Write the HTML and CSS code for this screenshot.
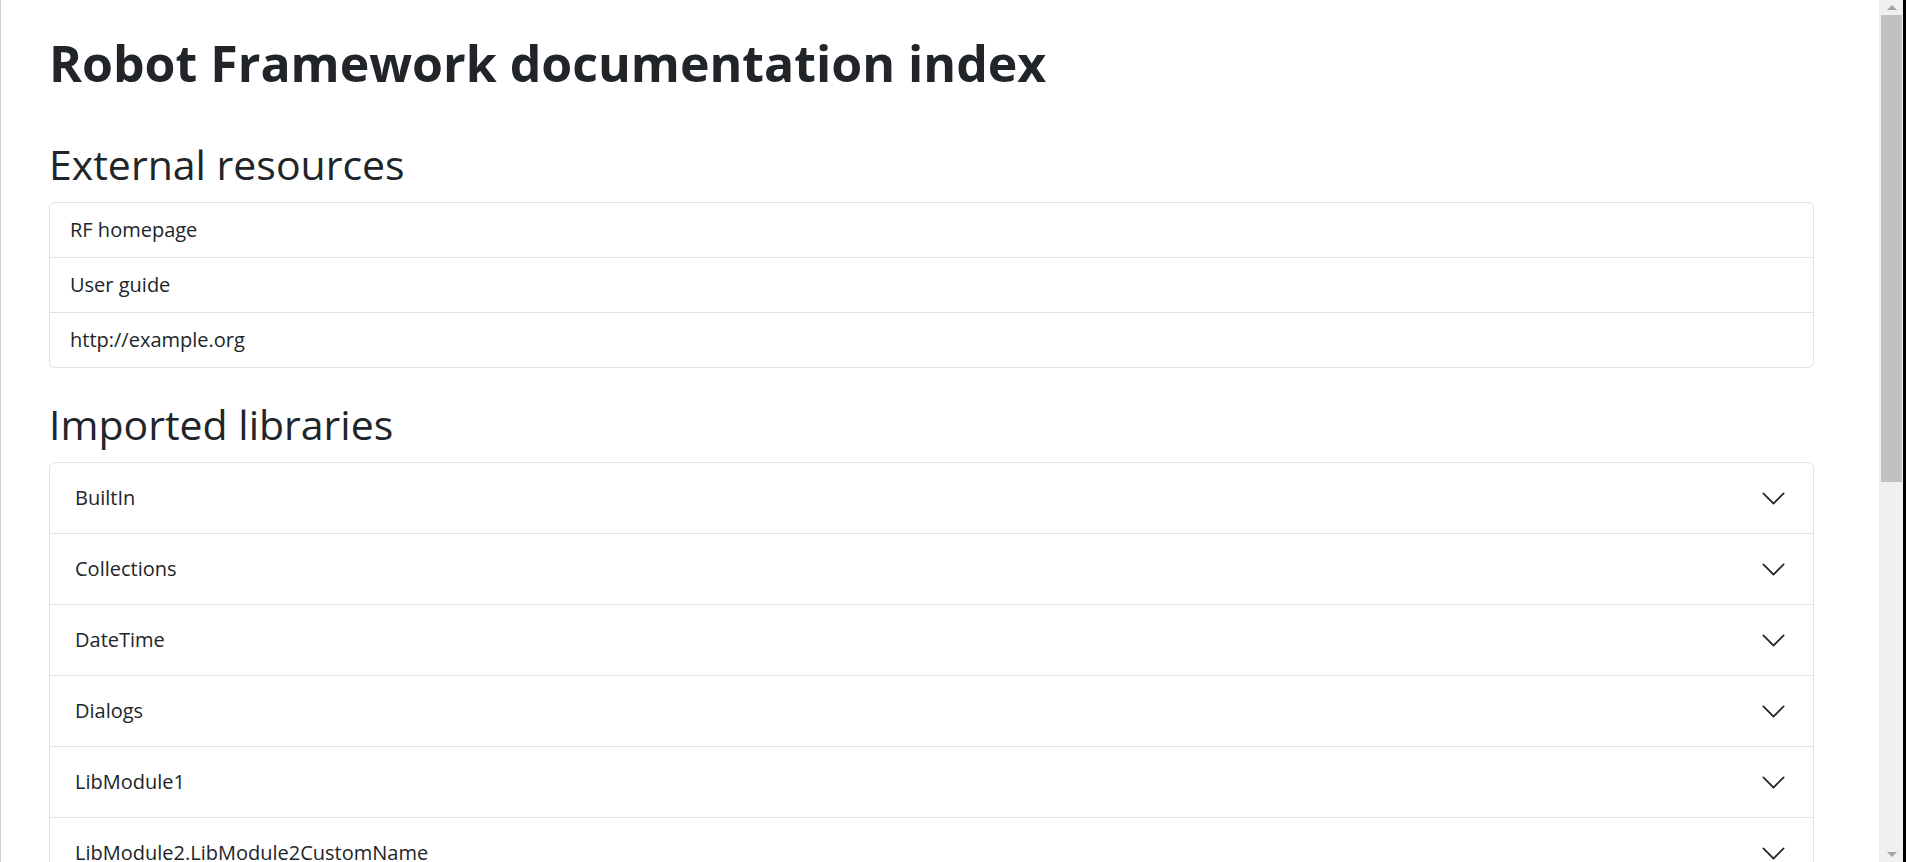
FILE: index.html
```html
<!DOCTYPE html>
<html lang="en">
<head>
<meta charset="utf-8">
<title>Robot Framework documentation index</title>
<link rel="stylesheet" href="styles.css">
</head>
<body>
<div class="window">
  <main class="page">
    <h1 class="title">Robot Framework documentation index</h1>

    <section class="section">
      <h2 class="section-title">External resources</h2>
      <ul class="list-group">
        <li class="list-item"><a class="list-link" href="#">RF homepage</a></li>
        <li class="list-item"><a class="list-link" href="#">User guide</a></li>
        <li class="list-item"><a class="list-link" href="#">http://example.org</a></li>
      </ul>
    </section>

    <section class="section">
      <h2 class="section-title">Imported libraries</h2>
      <div class="accordion">
        <div class="acc-item"><button class="acc-button"><span>BuiltIn</span><svg class="chevron" viewBox="0 0 16 16"><path d="M1.646 4.646a.5.5 0 0 1 .708 0L8 10.293l5.646-5.647a.5.5 0 0 1 .708.708l-6 6a.5.5 0 0 1-.708 0l-6-6a.5.5 0 0 1 0-.708z"/></svg></button></div>
        <div class="acc-item"><button class="acc-button"><span>Collections</span><svg class="chevron" viewBox="0 0 16 16"><path d="M1.646 4.646a.5.5 0 0 1 .708 0L8 10.293l5.646-5.647a.5.5 0 0 1 .708.708l-6 6a.5.5 0 0 1-.708 0l-6-6a.5.5 0 0 1 0-.708z"/></svg></button></div>
        <div class="acc-item"><button class="acc-button"><span>DateTime</span><svg class="chevron" viewBox="0 0 16 16"><path d="M1.646 4.646a.5.5 0 0 1 .708 0L8 10.293l5.646-5.647a.5.5 0 0 1 .708.708l-6 6a.5.5 0 0 1-.708 0l-6-6a.5.5 0 0 1 0-.708z"/></svg></button></div>
        <div class="acc-item"><button class="acc-button"><span>Dialogs</span><svg class="chevron" viewBox="0 0 16 16"><path d="M1.646 4.646a.5.5 0 0 1 .708 0L8 10.293l5.646-5.647a.5.5 0 0 1 .708.708l-6 6a.5.5 0 0 1-.708 0l-6-6a.5.5 0 0 1 0-.708z"/></svg></button></div>
        <div class="acc-item"><button class="acc-button"><span>LibModule1</span><svg class="chevron" viewBox="0 0 16 16"><path d="M1.646 4.646a.5.5 0 0 1 .708 0L8 10.293l5.646-5.647a.5.5 0 0 1 .708.708l-6 6a.5.5 0 0 1-.708 0l-6-6a.5.5 0 0 1 0-.708z"/></svg></button></div>
        <div class="acc-item"><button class="acc-button"><span>LibModule2.LibModule2CustomName</span><svg class="chevron" viewBox="0 0 16 16"><path d="M1.646 4.646a.5.5 0 0 1 .708 0L8 10.293l5.646-5.647a.5.5 0 0 1 .708.708l-6 6a.5.5 0 0 1-.708 0l-6-6a.5.5 0 0 1 0-.708z"/></svg></button></div>
        <div class="acc-item"><button class="acc-button"><span>OperatingSystem</span><svg class="chevron" viewBox="0 0 16 16"><path d="M1.646 4.646a.5.5 0 0 1 .708 0L8 10.293l5.646-5.647a.5.5 0 0 1 .708.708l-6 6a.5.5 0 0 1-.708 0l-6-6a.5.5 0 0 1 0-.708z"/></svg></button></div>
      </div>
    </section>
  </main>

  <div class="scrollbar">
    <div class="sb-arrow sb-up"></div>
    <div class="sb-track"><div class="sb-thumb"></div></div>
    <div class="sb-arrow sb-down"></div>
  </div>
</div>
</body>
</html>
```

FILE: styles.css
```css
* { box-sizing: border-box; }

html, body {
  margin: 0;
  padding: 0;
  height: 100%;
  overflow: hidden;
  background: #ffffff;
}

body {
  font-family: "Open Sans", "Lato", sans-serif;
  color: #212529;
  font-size: 20px;
  line-height: 1.5;
}

.window {
  display: flex;
  height: 862px;
  border-left: 1px solid #cfcfcf;
}

.page {
  flex: 1;
  min-width: 0;
  overflow: hidden;
  padding: 33px 65px 0 48px;
}

.title {
  margin: 0;
  font-size: 50px;
  line-height: 60px;
  font-weight: 700;
}

.section-title {
  margin: 0 0 14px 0;
  font-size: 41px;
  line-height: 48px;
  font-weight: 400;
}

.section { margin-top: 47px; }
.section + .section { margin-top: 32px; }

.list-group {
  list-style: none;
  margin: 0;
  padding: 0;
  border: 1px solid #dfe2e5;
  border-radius: 6px;
}

.list-item {
  padding: 12px 20px;
  line-height: 30px;
  font-size: 20px;
}

.list-item + .list-item { border-top: 1px solid #dfe2e5; }

.list-link {
  color: #212529;
  text-decoration: none;
}

.accordion {
  border: 1px solid #dfe2e5;
  border-radius: 6px;
}

.acc-item + .acc-item { border-top: 1px solid #dfe2e5; }

.acc-button {
  display: flex;
  align-items: center;
  justify-content: space-between;
  width: 100%;
  padding: 20px 26px 20px 25px;
  border: 0;
  background: transparent;
  font-family: inherit;
  font-size: 20px;
  line-height: 30px;
  color: #212529;
  text-align: left;
  cursor: pointer;
}

.chevron {
  width: 27px;
  height: 27px;
  flex-shrink: 0;
  fill: #212529;
}

.scrollbar {
  width: 27px;
  flex-shrink: 0;
  display: flex;
  flex-direction: column;
  background: #f0f0f0;
  border-right: 3px solid #000000;
  padding: 0 1px 0 2px;
}

.sb-arrow {
  height: 15px;
  display: flex;
  align-items: center;
  justify-content: center;
}

.sb-up::before {
  content: "";
  border-left: 5px solid transparent;
  border-right: 5px solid transparent;
  border-bottom: 5px solid #a3a3a3;
}

.sb-down::before {
  content: "";
  border-left: 5px solid transparent;
  border-right: 5px solid transparent;
  border-top: 5px solid #a3a3a3;
}

.sb-track {
  flex: 1;
}

.sb-thumb {
  height: 467px;
  background: #c1c1c1;
}
```
